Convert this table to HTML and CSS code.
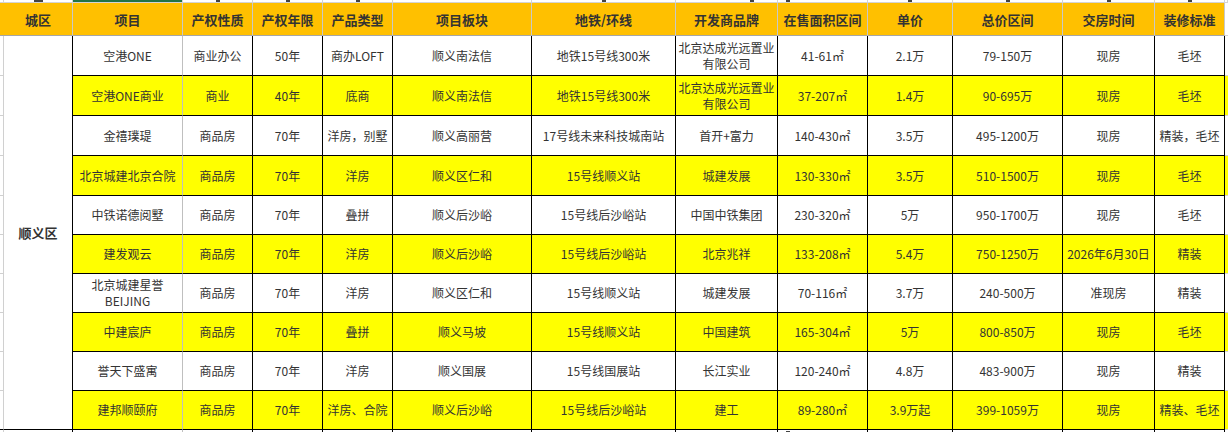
FILE: index.html
```html
<!DOCTYPE html>
<html lang="zh-CN">
<head>
<meta charset="utf-8">
<title>顺义区楼盘</title>
<link rel="stylesheet" href="styles.css">
</head>
<body>
<div class="sheet">
  <!-- top strip -->
  <div class="s pre"></div>
  <div class="s"><span class="tk w"></span></div>
  <div class="s sel g"><span class="tk green"></span></div>
  <div class="s"><span class="tk"></span></div>
  <div class="s"><span class="tk"></span></div>
  <div class="s"><span class="tk"></span></div>
  <div class="s"></div>
  <div class="s"><span class="tk"></span></div>
  <div class="s"><span class="tk off"></span></div>
  <div class="s"><span class="tk lft"></span></div>
  <div class="s"><span class="tk"></span></div>
  <div class="s"><span class="tk"></span></div>
  <div class="s"><span class="tk"></span></div>
  <div class="s"><span class="tk"></span></div>
  <div class="s end"></div>

  <!-- header -->
  <div class="h pre"></div>
  <div class="h">城区</div>
  <div class="h">项目</div>
  <div class="h">产权性质</div>
  <div class="h">产权年限</div>
  <div class="h">产品类型</div>
  <div class="h">项目板块</div>
  <div class="h">地铁/环线</div>
  <div class="h">开发商品牌</div>
  <div class="h">在售面积区间</div>
  <div class="h">单价</div>
  <div class="h">总价区间</div>
  <div class="h">交房时间</div>
  <div class="h">装修标准</div>
  <div class="h end"></div>

  <div class="d">顺义区</div>

  <!-- row 1 -->
  <div class="p"></div>
  <div class="c g">空港ONE</div>
  <div class="c">商业办公</div>
  <div class="c">50年</div>
  <div class="c">商办LOFT</div>
  <div class="c">顺义南法信</div>
  <div class="c">地铁15号线300米</div>
  <div class="c">北京达成光远置业有限公司</div>
  <div class="c">41-61㎡</div>
  <div class="c">2.1万</div>
  <div class="c">79-150万</div>
  <div class="c">现房</div>
  <div class="c">毛坯</div>
  <div class="e"></div>

  <!-- row 2 -->
  <div class="p"></div>
  <div class="c g y">空港ONE商业</div>
  <div class="c y">商业</div>
  <div class="c y">40年</div>
  <div class="c y">底商</div>
  <div class="c y">顺义南法信</div>
  <div class="c y">地铁15号线300米</div>
  <div class="c y">北京达成光远置业有限公司</div>
  <div class="c y">37-207㎡</div>
  <div class="c y">1.4万</div>
  <div class="c y">90-695万</div>
  <div class="c y">现房</div>
  <div class="c y">毛坯</div>
  <div class="e y"></div>

  <!-- row 3 -->
  <div class="p"></div>
  <div class="c g">金禧璞瑅</div>
  <div class="c">商品房</div>
  <div class="c">70年</div>
  <div class="c">洋房，别墅</div>
  <div class="c">顺义高丽营</div>
  <div class="c">17号线未来科技城南站</div>
  <div class="c">首开+富力</div>
  <div class="c">140-430㎡</div>
  <div class="c">3.5万</div>
  <div class="c">495-1200万</div>
  <div class="c">现房</div>
  <div class="c">精装，毛坯</div>
  <div class="e"></div>

  <!-- row 4 -->
  <div class="p"></div>
  <div class="c g y">北京城建北京合院</div>
  <div class="c y">商品房</div>
  <div class="c y">70年</div>
  <div class="c y">洋房</div>
  <div class="c y">顺义区仁和</div>
  <div class="c y">15号线顺义站</div>
  <div class="c y">城建发展</div>
  <div class="c y">130-330㎡</div>
  <div class="c y">3.5万</div>
  <div class="c y">510-1500万</div>
  <div class="c y">现房</div>
  <div class="c y">毛坯</div>
  <div class="e y"></div>

  <!-- row 5 -->
  <div class="p"></div>
  <div class="c g">中铁诺德阅墅</div>
  <div class="c">商品房</div>
  <div class="c">70年</div>
  <div class="c">叠拼</div>
  <div class="c">顺义后沙峪</div>
  <div class="c">15号线后沙峪站</div>
  <div class="c">中国中铁集团</div>
  <div class="c">230-320㎡</div>
  <div class="c">5万</div>
  <div class="c">950-1700万</div>
  <div class="c">现房</div>
  <div class="c">毛坯</div>
  <div class="e"></div>

  <!-- row 6 -->
  <div class="p"></div>
  <div class="c g y">建发观云</div>
  <div class="c y">商品房</div>
  <div class="c y">70年</div>
  <div class="c y">洋房</div>
  <div class="c y">顺义后沙峪</div>
  <div class="c y">15号线后沙峪站</div>
  <div class="c y">北京兆祥</div>
  <div class="c y">133-208㎡</div>
  <div class="c y">5.4万</div>
  <div class="c y">750-1250万</div>
  <div class="c y">2026年6月30日</div>
  <div class="c y">精装</div>
  <div class="e y"></div>

  <!-- row 7 -->
  <div class="p"></div>
  <div class="c g">北京城建星誉 BEIJING</div>
  <div class="c">商品房</div>
  <div class="c">70年</div>
  <div class="c">洋房</div>
  <div class="c">顺义区仁和</div>
  <div class="c">15号线顺义站</div>
  <div class="c">城建发展</div>
  <div class="c">70-116㎡</div>
  <div class="c">3.7万</div>
  <div class="c">240-500万</div>
  <div class="c">准现房</div>
  <div class="c">精装</div>
  <div class="e"></div>

  <!-- row 8 -->
  <div class="p"></div>
  <div class="c g y">中建宸庐</div>
  <div class="c y">商品房</div>
  <div class="c y">70年</div>
  <div class="c y">叠拼</div>
  <div class="c y">顺义马坡</div>
  <div class="c y">15号线顺义站</div>
  <div class="c y">中国建筑</div>
  <div class="c y">165-304㎡</div>
  <div class="c y">5万</div>
  <div class="c y">800-850万</div>
  <div class="c y">现房</div>
  <div class="c y">毛坯</div>
  <div class="e y"></div>

  <!-- row 9 -->
  <div class="p"></div>
  <div class="c g">誉天下盛寓</div>
  <div class="c">商品房</div>
  <div class="c">70年</div>
  <div class="c">洋房</div>
  <div class="c">顺义国展</div>
  <div class="c">15号线国展站</div>
  <div class="c">长江实业</div>
  <div class="c">120-240㎡</div>
  <div class="c">4.8万</div>
  <div class="c">483-900万</div>
  <div class="c">现房</div>
  <div class="c">精装</div>
  <div class="e"></div>

  <!-- row 10 -->
  <div class="p last"></div>
  <div class="c g y">建邦顺颐府</div>
  <div class="c y">商品房</div>
  <div class="c y">70年</div>
  <div class="c y">洋房、合院</div>
  <div class="c y">顺义后沙峪</div>
  <div class="c y">15号线后沙峪站</div>
  <div class="c y">建工</div>
  <div class="c y">89-280㎡</div>
  <div class="c y">3.9万起</div>
  <div class="c y">399-1059万</div>
  <div class="c y">现房</div>
  <div class="c y">精装、毛坯</div>
  <div class="e y"></div>

  <!-- partial next row -->
  <div class="b pre"></div>
  <div class="b"></div>
  <div class="b g"></div>
  <div class="b"></div>
  <div class="b"></div>
  <div class="b"></div>
  <div class="b"></div>
  <div class="b"></div>
  <div class="b"></div>
  <div class="b"><span class="tk lft"></span></div>
  <div class="b"></div>
  <div class="b"></div>
  <div class="b"></div>
  <div class="b"></div>
  <div class="b end"></div>
</div>
</body>
</html>
```

FILE: styles.css
```css
* {
  box-sizing: border-box;
}

html,
body {
  margin: 0;
  padding: 0;
  background: #ffffff;
}

body {
  width: 1228px;
  height: 432px;
  overflow: hidden;
  font-family: "Noto Sans CJK SC", "Microsoft YaHei", sans-serif;
  font-size: 12px;
  color: #333333;
}

.sheet {
  display: grid;
  grid-template-columns: 4px 69px 110px 70px 70px 70px 139px 144px 102px 90px 85px 110px 92px 70px 1fr;
  grid-template-rows: 3px 33px 40px 40px 40px 40px 39px 39px 39px 39px 39px 39px 3px;
}

/* top strip (remnant of the row above) */
.s {
  display: flex;
  justify-content: center;
  align-items: flex-start;
  border-right: 1px solid #d4d4d4;
  border-bottom: 1px solid #d4d4d4;
}

.s.sel {
  box-shadow: inset 0 -2px 0 #217346;
}

.tk {
  display: block;
  width: 4px;
  height: 2px;
  background: #444444;
}

.tk.w {
  width: 9px;
}

.tk.green {
  width: 5px;
  height: 2px;
  background: #217346;
}

.tk.off {
  margin-left: 50px;
}

.tk.lft {
  margin-right: 70px;
}

/* header */
.h {
  display: flex;
  justify-content: center;
  align-items: center;
  background: #ffc000;
  border-right: 1px solid #c8c8c8;
  border-bottom: 1px solid #a6a6a6;
  font-size: 13px;
  font-weight: bold;
  color: #333333;
}

.h.pre {
  border-right: none;
}

.h.end {
  background: #ffffff;
  border-right: none;
  border-bottom: 1px solid #d4d4d4;
}

/* district merged cell */
.d {
  grid-column: 2;
  grid-row: 3 / span 10;
  display: flex;
  justify-content: center;
  align-items: center;
  border-right: 1px solid #000000;
  border-bottom: 1px solid #000000;
  font-size: 13px;
  font-weight: bold;
  color: #333333;
}

/* previous-column slice on the left */
.p {
  grid-column: 1;
  border-right: 1px solid #d0d0d0;
  border-bottom: 1px solid #d0d0d0;
}

.p.last {
  border-bottom: 1px solid #000000;
}

/* body cells */
.c {
  display: flex;
  justify-content: center;
  align-items: center;
  text-align: center;
  padding: 0 1px;
  line-height: 16px;
  border-right: 1px solid #000000;
  border-bottom: 1px solid #000000;
  overflow: hidden;
}

.c.g {
  border-right: 1px solid #bfbfbf;
}

.y {
  background: #ffff00;
}

.e {
  border-bottom: 1px solid #d4d4d4;
}

/* partially visible row below */
.b {
  display: flex;
  justify-content: center;
  align-items: flex-end;
  border-right: 1px solid #000000;
}

.b.g {
  border-right: 1px solid #bfbfbf;
}

.b.pre {
  border-right: 1px solid #d0d0d0;
}

.b.end {
  border-right: none;
}
```
